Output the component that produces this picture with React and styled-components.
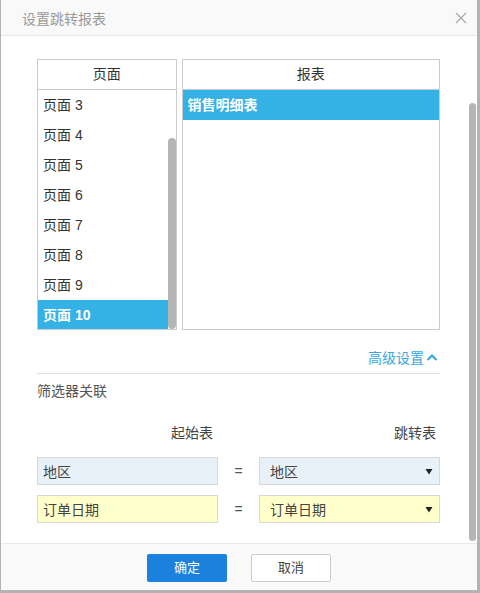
import React from 'react'
import styled, { createGlobalStyle } from 'styled-components'

const GlobalStyle = createGlobalStyle`
  html, body {
    margin: 0;
    padding: 0;
    background: #b3b3b3;
    font-family: "Liberation Sans", "Noto Sans CJK SC", sans-serif;
  }
`

const Dialog = styled.div`
  margin-left: 1px;
  width: 476px;
  height: 590px;
  background: #fff;
  display: flex;
  flex-direction: column;
  color: #333;
  font-size: 14px;
`

const Header = styled.div`
  height: 35px;
  flex-shrink: 0;
  background: #f9f9f9;
  border-bottom: 1px solid #e8e8e8;
  display: flex;
  align-items: center;
  justify-content: space-between;
  padding: 0 10px 0 21px;
`

const Title = styled.div`
  color: #999;
  font-size: 14px;
`

const Close = styled.div`
  width: 12px;
  height: 12px;
  display: flex;
`

const Body = styled.div`
  flex: 1;
  position: relative;
  padding: 23px 37px 0 36px;
`

// scroll thumbs are drawn over the content, the headless page hides real scrollbars
const Thumb = styled.div`
  position: absolute;
  right: ${p => p.$right}px;
  top: ${p => p.$top}px;
  width: ${p => p.$w}px;
  height: ${p => p.$h}px;
  border-radius: 4px;
  background: #b5b5b5;
`

const Lists = styled.div`
  display: flex;
  gap: 5px;
  height: 271px;
`

const ListBox = styled.div`
  position: relative;
  width: ${p => p.$width}px;
  border: 1px solid #ccc;
  display: flex;
  flex-direction: column;
`

const ListHead = styled.div`
  height: 29px;
  line-height: 29px;
  flex-shrink: 0;
  text-align: center;
  border-bottom: 1px solid #ccc;
`

const ListBody = styled.div`
  flex: 1;
  overflow: hidden;
  margin-right: ${p => p.$gutter || 0}px;
`

const Item = styled.div`
  height: 30px;
  line-height: 30px;
  padding-left: 5px;
  background: ${p => (p.$active ? '#34b1e5' : 'transparent')};
  color: ${p => (p.$active ? '#fff' : '#333')};
  font-weight: ${p => (p.$active ? 700 : 400)};
`

const AdvRow = styled.div`
  margin-top: 17px;
  height: 20px;
  display: flex;
  justify-content: flex-end;
  align-items: center;
  gap: 2px;
  padding-right: 2px;
  color: #3aa8dc;
`

const Divider = styled.div`
  margin-top: 6px;
  height: 1px;
  background: #ddd;
`

const SectionTitle = styled.div`
  margin-top: 7px;
  height: 20px;
  line-height: 20px;
  color: #555;
`

const MapGrid = styled.div`
  display: grid;
  grid-template-columns: 181px 41px 181px;
  row-gap: 10px;
  align-items: center;
`

const ColHead = styled.div`
  margin-top: 22px;
  margin-bottom: 4px;
  height: 20px;
  line-height: 20px;
  text-align: right;
  padding-right: ${p => p.$pad}px;
  color: #444;
`

const Field = styled.div`
  box-sizing: border-box;
  height: 28px;
  border: 1px solid #d9d9d9;
  background: ${p => p.$bg};
  display: flex;
  align-items: center;
  justify-content: space-between;
  padding: 0 6px 0 ${p => p.$padLeft}px;
  color: #444;
`

const Eq = styled.div`
  text-align: center;
  color: #555;
`

const Footer = styled.div`
  height: 47px;
  flex-shrink: 0;
  box-sizing: border-box;
  background: #f9f9f9;
  border-top: 1px solid #e8e8e8;
  display: flex;
  justify-content: center;
  align-items: flex-start;
  gap: 24px;
  padding-top: 10px;
`

const Button = styled.div`
  box-sizing: border-box;
  width: 80px;
  height: 28px;
  line-height: ${p => (p.$primary ? 28 : 26)}px;
  text-align: center;
  font-size: 13px;
  border-radius: 2px;
  background: ${p => (p.$primary ? '#1a82dc' : '#fff')};
  color: ${p => (p.$primary ? '#fff' : '#444')};
  border: ${p => (p.$primary ? 'none' : '1px solid #ccc')};
`

// list is scrolled down two rows, so the first visible page is 3
const pages = Array.from({ length: 8 }, (_, i) => `页面 ${i + 3}`)

const rows = [
  { name: '地区', bg: '#e8f1f8' },
  { name: '订单日期', bg: '#ffffcc' },
]

function Arrow() {
  return (
    <svg width="8" height="7" viewBox="0 0 8 7">
      <path d="M0.5 1 L7.5 1 L4 6.5 Z" fill="#222" />
    </svg>
  )
}

export default function App() {
  return (
    <>
      <GlobalStyle />
      <Dialog>
        <Header>
          <Title>设置跳转报表</Title>
          <Close>
            <svg width="12" height="12" viewBox="0 0 12 12">
              <path d="M1 1 L11 11 M11 1 L1 11" stroke="#aaa" strokeWidth="1.2" />
            </svg>
          </Close>
        </Header>

        <Body>
          <Lists>
            <ListBox $width={139}>
              <ListHead>页面</ListHead>
              <ListBody $gutter={8}>
                {pages.map(p => (
                  <Item key={p} $active={p === '页面 10'}>{p}</Item>
                ))}
              </ListBody>
              <Thumb $right={0} $top={78} $w={8} $h={191} />
            </ListBox>
            <ListBox $width={259}>
              <ListHead>报表</ListHead>
              <ListBody>
                <Item $active>销售明细表</Item>
              </ListBody>
            </ListBox>
          </Lists>

          <AdvRow>
            高级设置
            <svg width="12" height="9" viewBox="0 0 12 9">
              <path d="M1.5 7 L6 2.5 L10.5 7" stroke="#3aa8dc" strokeWidth="2.2" fill="none" />
            </svg>
          </AdvRow>
          <Divider />
          <SectionTitle>筛选器关联</SectionTitle>

          <MapGrid>
            <ColHead $pad={5}>起始表</ColHead>
            <div />
            <ColHead $pad={4}>跳转表</ColHead>
            {rows.map(r => (
              <React.Fragment key={r.name}>
                <Field $bg={r.bg} $padLeft={5}>{r.name}</Field>
                <Eq>=</Eq>
                <Field $bg={r.bg} $padLeft={10}>
                  {r.name}
                  <Arrow />
                </Field>
              </React.Fragment>
            ))}
          </MapGrid>

          <Thumb $right={1} $top={67} $w={7} $h={438} />
        </Body>

        <Footer>
          <Button $primary>确定</Button>
          <Button>取消</Button>
        </Footer>
      </Dialog>
    </>
  )
}
